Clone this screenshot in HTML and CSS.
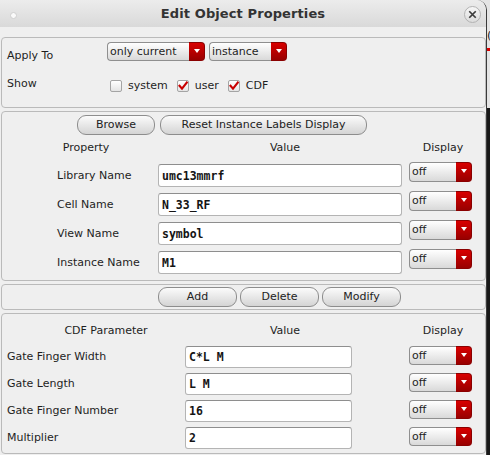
FILE: index.html
```html
<!DOCTYPE html>
<html>
<head>
<meta charset="utf-8">
<title>Edit Object Properties</title>
<link rel="stylesheet" href="styles.css">
</head>
<body>
<div class="desk-mark desk-paren">(</div>
<div class="desk-mark desk-red"></div>
<div class="window">
  <div class="titlebar">
    <span class="menu-dot"></span>
    <span class="title">Edit Object Properties</span>
    <span class="close"><svg viewBox="0 0 10 10" class="close-x"><path d="M2.5 2.5 L7.5 7.5 M7.5 2.5 L2.5 7.5"/></svg></span>
  </div>
  <div class="content">
    <section class="box box-apply">
      <div class="apply-row">
        <span class="lbl lbl-apply">Apply To</span>
        <div class="combo combo-current"><span class="combo-text">only current</span><span class="combo-btn"></span></div>
        <div class="combo combo-inst"><span class="combo-text">instance</span><span class="combo-btn"></span></div>
      </div>
      <div class="show-row">
        <span class="lbl lbl-show">Show</span>
        <div class="checks">
          <span class="check"><span class="cb"></span>system</span>
          <span class="check"><span class="cb"><svg viewBox="0 0 10 10" class="tick"><path d="M1.5 4.8 L4 7.6 L8.8 1.6"/></svg></span>user</span>
          <span class="check"><span class="cb"><svg viewBox="0 0 10 10" class="tick"><path d="M1.5 4.8 L4 7.6 L8.8 1.6"/></svg></span>CDF</span>
        </div>
      </div>
    </section>

    <section class="box box-props">
      <div class="btn-row btn-row-props">
        <button class="btn btn-browse">Browse</button>
        <button class="btn btn-reset">Reset Instance Labels Display</button>
      </div>
      <div class="head-row">
        <span class="h h-prop">Property</span>
        <span class="h h-pval">Value</span>
        <span class="h h-disp">Display</span>
      </div>
      <div class="rows">
        <div class="prow">
          <span class="plabel">Library Name</span>
          <input class="field pfield" type="text" value="umc13mmrf">
          <div class="combo combo-off pcombo"><span class="combo-text">off</span><span class="combo-btn"></span></div>
        </div>
        <div class="prow">
          <span class="plabel">Cell Name</span>
          <input class="field pfield" type="text" value="N_33_RF">
          <div class="combo combo-off pcombo"><span class="combo-text">off</span><span class="combo-btn"></span></div>
        </div>
        <div class="prow">
          <span class="plabel">View Name</span>
          <input class="field pfield" type="text" value="symbol">
          <div class="combo combo-off pcombo"><span class="combo-text">off</span><span class="combo-btn"></span></div>
        </div>
        <div class="prow">
          <span class="plabel">Instance Name</span>
          <input class="field pfield" type="text" value="M1">
          <div class="combo combo-off pcombo"><span class="combo-text">off</span><span class="combo-btn"></span></div>
        </div>
      </div>
    </section>

    <section class="box box-actions">
      <div class="btn-row btn-row-actions">
        <button class="btn btn-act">Add</button>
        <button class="btn btn-act">Delete</button>
        <button class="btn btn-act">Modify</button>
      </div>
    </section>

    <section class="box box-cdf">
      <div class="head-row">
        <span class="h h-cdf">CDF Parameter</span>
        <span class="h h-cval">Value</span>
        <span class="h h-cdisp">Display</span>
      </div>
      <div class="rows rows-cdf">
        <div class="crow">
          <span class="clabel">Gate Finger Width</span>
          <input class="field cfield" type="text" value="C*L M">
          <div class="combo combo-off ccombo"><span class="combo-text">off</span><span class="combo-btn"></span></div>
        </div>
        <div class="crow">
          <span class="clabel">Gate Length</span>
          <input class="field cfield" type="text" value="L M">
          <div class="combo combo-off ccombo"><span class="combo-text">off</span><span class="combo-btn"></span></div>
        </div>
        <div class="crow">
          <span class="clabel">Gate Finger Number</span>
          <input class="field cfield" type="text" value="16">
          <div class="combo combo-off ccombo"><span class="combo-text">off</span><span class="combo-btn"></span></div>
        </div>
        <div class="crow">
          <span class="clabel">Multiplier</span>
          <input class="field cfield" type="text" value="2">
          <div class="combo combo-off ccombo"><span class="combo-text">off</span><span class="combo-btn"></span></div>
        </div>
      </div>
    </section>
  </div>
</div>
</body>
</html>
```

FILE: styles.css
```css
* { box-sizing: border-box; }

html, body { margin: 0; padding: 0; }

body {
  width: 490px;
  height: 455px;
  overflow: hidden;
  position: relative;
  background: linear-gradient(#e4e4e4 0, #e4e4e4 108px, #181818 108px, #181818 100%);
  font-family: "DejaVu Sans", sans-serif;
  font-size: 11px;
  color: #1e1e1e;
}

.desk-mark { position: absolute; left: 487px; }
.desk-paren { top: 30px; font-size: 11px; line-height: 12px; color: #222; }
.desk-red { top: 48px; width: 3px; height: 3px; background: #d00; }

.window {
  width: 487px;
  height: 455px;
  background: #efefef;
  border-right: 1px solid #3a3a3a;
  border-top-right-radius: 10px;
  overflow: hidden;
}

/* title bar */
.titlebar {
  height: 27px;
  background: linear-gradient(#ececec, #d9d9d9);
  display: grid;
  grid-template-columns: 1fr auto 1fr;
  align-items: center;
}
.menu-dot {
  width: 7px;
  height: 7px;
  margin-left: 10px;
  margin-top: 4px;
  border-radius: 50%;
  background: #fafafa;
  border: 1px solid #cfcfcf;
}
.title {
  font-weight: bold;
  font-size: 13px;
  color: #333;
  letter-spacing: 0.1px;
}
.close {
  justify-self: end;
  margin-right: 5px;
  margin-top: 2px;
  width: 17px;
  height: 17px;
  border-radius: 50%;
  border: 1px solid #b2b2b2;
  background: linear-gradient(#f6f6f6, #dcdcdc);
  display: flex;
  align-items: center;
  justify-content: center;
}
.close-x { width: 13px; height: 13px; }
.close-x path { stroke: #3c3c3c; stroke-width: 1.3; fill: none; }

/* content */
.content {
  padding: 10px 0 0 1px;
  display: flex;
  flex-direction: column;
  gap: 3px;
}
.box {
  width: 485px;
  border: 1px solid #bababa;
  border-radius: 4px;
  background: #efefef;
}

/* apply box */
.box-apply { height: 71px; padding: 4px 0 0 5px; }
.apply-row { display: flex; align-items: flex-start; height: 19px; }
.lbl { width: 100px; line-height: 13px; flex: none; }
.lbl-apply { padding-top: 7px; }
.show-row { display: flex; align-items: flex-start; margin-top: 15px; }
.lbl-show { margin-top: 1px; }
.checks { display: flex; align-items: center; height: 13px; margin-top: 3px; margin-left: 3px; }
.check { display: inline-flex; align-items: center; gap: 6px; margin-right: 9px; line-height: 13px; }
.cb {
  width: 12px;
  height: 12px;
  border: 1px solid #a4a4a4;
  border-radius: 2px;
  background: linear-gradient(#ffffff, #e4e4e4);
  display: inline-flex;
  align-items: center;
  justify-content: center;
}
.tick { width: 10px; height: 10px; }
.tick path { fill: none; stroke: #c80000; stroke-width: 2.1; stroke-linecap: square; }

/* combos */
.combo { display: flex; height: 19px; flex: none; }
.combo-text {
  flex: 1;
  border: 1px solid #8f8f8f;
  border-right: none;
  border-radius: 4px 0 0 4px;
  background: linear-gradient(#ffffff, #d9d9d9);
  line-height: 17px;
  padding-left: 2px;
  white-space: nowrap;
  overflow: hidden;
}
.combo-btn {
  width: 16px;
  border-radius: 0 4px 4px 0;
  background: linear-gradient(#d80000, #980000);
  border: 1px solid #8a0000;
  border-left: none;
  display: flex;
  align-items: center;
  justify-content: center;
}
.combo-btn::after {
  content: "";
  width: 0;
  height: 0;
  margin-top: -2px;
  border-left: 3.5px solid transparent;
  border-right: 3.5px solid transparent;
  border-top: 4px solid #ffffff;
}
.combo-current { width: 98px; margin-right: 4px; }
.combo-inst { width: 78px; }

/* buttons */
.btn-row { display: flex; }
.btn {
  height: 20px;
  border: 1px solid #8d8d8d;
  border-radius: 9px;
  background: linear-gradient(#fbfbfb, #d4d4d4);
  font-family: "DejaVu Sans", sans-serif;
  font-size: 11px;
  color: #222;
  padding: 0;
  line-height: 18px;
  text-align: center;
}
.btn-row-props { margin-left: 75px; gap: 5px; }
.btn-browse { width: 78px; }
.btn-reset { width: 207px; }
.btn-row-actions { margin-left: 156px; gap: 3px; }
.btn-act { width: 79px; }

/* props box */
.box-props { height: 170px; padding-top: 3px; }
.head-row { display: flex; line-height: 13px; }
.box-props .head-row { margin-top: 6px; }
.h { text-align: center; flex: none; }
.h-prop { width: 168px; }
.h-pval { width: 230px; }
.h-disp { width: 76px; margin-left: 5px; }

.box-props .rows { margin-top: 8px; }
.prow { display: flex; align-items: flex-start; margin-bottom: 4px; }
.plabel { width: 156px; padding-left: 55px; line-height: 23px; margin-top: 2px; flex: none; }

.field {
  flex: none;
  margin: 0;
  border: 1px solid #b4b4b4;
  border-top-color: #8e8e8e;
  border-radius: 3px;
  background: #ffffff;
  font-family: "DejaVu Sans Mono", monospace;
  font-weight: bold;
  font-size: 11.5px;
  color: #141414;
  padding: 0 0 0 3px;
  outline: none;
}
.pfield { width: 244px; height: 23px; margin-top: 2px; }
.pcombo { width: 63px; height: 20px; margin-left: 7px; }
.pcombo .combo-text { line-height: 18px; }

/* actions box */
.box-actions { height: 26px; padding-top: 2px; }

/* cdf box */
.box-cdf { height: 141px; padding-top: 10px; }
.h-cdf { width: 208px; }
.h-cval { width: 150px; }
.h-cdisp { width: 76px; margin-left: 45px; }
.rows-cdf { margin-top: 9px; }
.crow { display: flex; align-items: flex-start; margin-bottom: 5px; }
.clabel { width: 183px; padding-left: 5px; line-height: 22px; flex: none; }
.cfield { width: 167px; height: 22px; }
.ccombo { width: 63px; height: 19px; margin-left: 57px; }
```
